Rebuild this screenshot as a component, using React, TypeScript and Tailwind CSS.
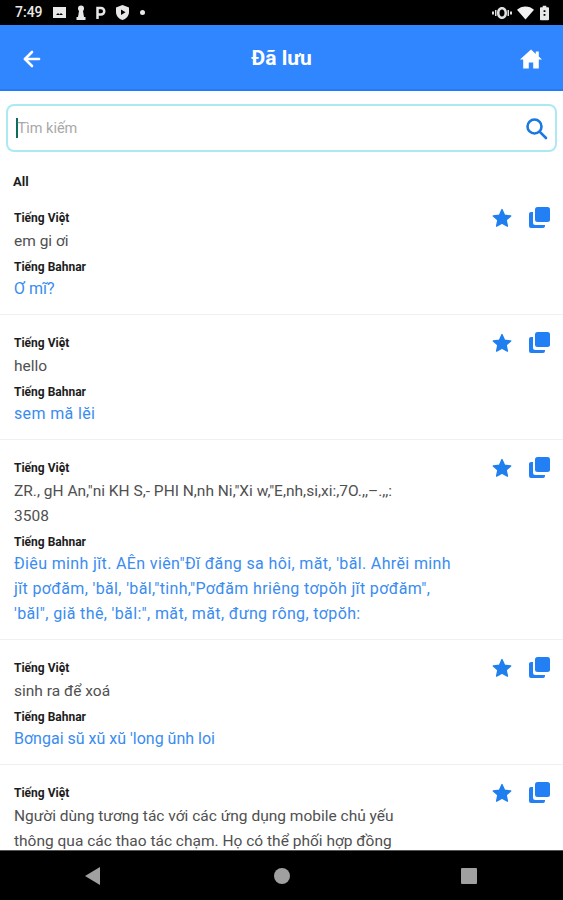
import React from "react";
import { ArrowLeft } from "lucide-react";

type Saved = { source: string[]; target: string[]; wide?: boolean };

const items: Saved[] = [
  { source: ["em gi ơi"], target: ["Ơ mĩ?"] },
  { source: ["hello"], target: ["sem mă lĕi"], wide: true },
  {
    source: ["ZR., gH An,\"ni KH S,- PHI N,nh Ni,\"Xi w,\"E,nh,si,xi:,7O.,,–.,,:", "3508"],
    target: [
      "Điêu minh jĭt. AÊn viên\"Đĭ đăng sa hôi, măt, 'băl. Ahrĕi minh",
      "jĭt pơđăm, 'băl, 'băl,\"tinh,\"Pơđăm hriêng tơpŏh jĭt pơđăm\",",
      "'băl\", giă thê, 'băl:\", măt, măt, đưng rông, tơpŏh:",
    ],
    wide: true,
  },
  { source: ["sinh ra để xoá"], target: ["Bơngai sŭ xŭ xŭ 'long ŭnh loi"] },
  {
    source: [
      "Người dùng tương tác với các ứng dụng mobile chủ yếu",
      "thông qua các thao tác chạm. Họ có thể phối hợp đồng",
    ],
    target: [],
  },
];

const StarIcon = () => (
  <svg width="22" height="22" viewBox="0 0 24 24" fill="#1f7fef" stroke="#1f7fef" strokeWidth="1.5" strokeLinejoin="round">
    <path d="M12 2.800l2.800 6.200 6.700.7-5 4.500 1.400 6.600L12 17.500l-5.900 3.300 1.400-6.600-5-4.500 6.700-.7z" />
  </svg>
);

const CopyIcon = () => (
  <svg width="23" height="23" viewBox="0 0 23 23" fill="#2280f4">
    <rect x="7" y="1" width="15" height="15" rx="2.500" />
    <path d="M5 6v10.500A2.500 2.500 0 0 0 7.500 19H17v1a2 2 0 0 1-2 2H3a2 2 0 0 1-2-2V8a2 2 0 0 1 2-2z" />
  </svg>
);

const HomeIcon = () => (
  <svg width="24" height="24" viewBox="0 0 24 24" fill="white">
    <path d="M12 2.500L1 12.500h3.200V21.500h5.600v-6h4.400v6h5.600v-9H23l-3.200-2.900V4.500h-3v2.400z" />
  </svg>
);

const SearchIcon = () => (
  <svg width="24" height="24" viewBox="0 0 24 24" fill="none" stroke="#1a78e0" strokeWidth="2.600" strokeLinecap="round">
    <circle cx="10.500" cy="10.500" r="7" />
    <path d="M15.800 15.800L22 22" />
  </svg>
);

const StatusBar = () => (
  <div className="h-[25px] shrink-0 bg-black flex items-center pl-[15px] pr-[14px] text-[#e8e8e8]">
    <span className="text-[14px] font-medium w-[38px]">7:49</span>
    <div className="flex items-center gap-[10px] flex-1">
      <svg width="13" height="11" viewBox="0 0 13 11" fill="#e8e8e8">
        <path d="M0 0h13v11H0z" />
        <path d="M3 8l2-2 1.500 1.500L8 6l2 2z" fill="#000" />
      </svg>
      <svg width="10" height="15" viewBox="0 0 10 15" fill="#e8e8e8">
        <circle cx="5" cy="3.500" r="3" />
        <path d="M3 6h4l1 6h1.500v3H.5v-3H2z" />
      </svg>
      <svg width="10" height="13" viewBox="0 0 10 13" fill="none" stroke="#e8e8e8" strokeWidth="2.500">
        <path d="M1.500 13V2h3.500a3 3 0 0 1 0 6.500H1.500" />
      </svg>
      <svg width="13" height="15" viewBox="0 0 13 15" fill="#e8e8e8">
        <path fillRule="evenodd" d="M6.500 0L13 2.500V7c0 4-3 7-6.500 8C3 14 0 11 0 7V2.500zM5 4.500v5.500l4.500-2.700z" />
      </svg>
      <div className="w-[5px] h-[5px] rounded-full bg-[#e8e8e8] ml-[1px]" />
    </div>
    <div className="flex items-center gap-[5px]">
      <svg width="20" height="14" viewBox="0 0 20 14" fill="#e0e0e0">
        <path fillRule="evenodd" d="M10 1c3 0 5 2.500 5 6s-2 6-5 6-5-2.500-5-6 2-6 5-6zm0 2.500c-1.500 0-2.500 1.500-2.500 3.500s1 3.500 2.500 3.500 2.500-1.500 2.500-3.500-1-3.500-2.500-3.500z" />
        <path d="M0 5.500h2v3H0zM3 4h1.500v6H3zM15.500 4H17v6h-1.500zM18 5.500h2v3h-2z" />
      </svg>
      <svg width="17" height="14" viewBox="0 0 18 14" fill="#f2f2f2">
        <path d="M0 3.500C2.500 1.300 5.600 0 9 0s6.500 1.300 9 3.500L9 14z" />
      </svg>
      <svg width="9" height="16" viewBox="0 0 10 16" fill="#e8e8e8" className="ml-[1px]">
        <path fillRule="evenodd" d="M3 0h4v1.500h2a1 1 0 0 1 1 1V15a1 1 0 0 1-1 1H1a1 1 0 0 1-1-1V2.500a1 1 0 0 1 1-1h2zM4 5v2h2V5zm0 4v2h2V9z" />
      </svg>
    </div>
  </div>
);

const Header = () => (
  <div className="h-[66px] shrink-0 bg-[#2f86fe] border-b-2 border-[#1f7cf5] pt-[4px] flex items-center justify-between pl-[20px] pr-[20px]">
    <ArrowLeft size={24} color="white" strokeWidth={2.6} />
    <h1 className="text-[21px] font-bold text-white">Đã lưu</h1>
    <HomeIcon />
  </div>
);

const SearchBox = () => (
  <div className="mx-[6px] mt-[13px] h-[48px] shrink-0 rounded-[8px] border-2 border-[#ade9f5] flex items-center pl-[8px] pr-[7px]">
    <div className="w-[1.500px] h-[20px] bg-[#0f6b5c]" />
    <span className="text-[14.500px] text-[#a8a8a8] flex-1 pt-[2px]">Tìm kiếm</span>
    <SearchIcon />
  </div>
);

const Row = ({ item }: { item: Saved }) => (
  <div className="relative border-b border-[#f0f0f0] pl-[14px] pr-[112px] pt-[20px] pb-[13px]">
    <div className="absolute right-[12px] top-[16px] flex items-center gap-[15px]">
      <StarIcon />
      <CopyIcon />
    </div>
    <div className="text-[12px] leading-[16px] font-bold text-[#1c1c1c]">Tiếng Việt</div>
    <div className="text-[15.500px] leading-[25px] text-[#505050] whitespace-nowrap mt-[3px]">
      {item.source.map((line) => (
        <div key={line}>{line}</div>
      ))}
    </div>
    {item.target.length > 0 && (
      <>
        <div className="text-[12px] leading-[16px] font-bold text-[#1c1c1c] mt-[5px]">Tiếng Bahnar</div>
        <div className={`text-[16px] leading-[25px] text-[#3a8cf0] whitespace-nowrap mt-[1px] ${item.wide ? "tracking-[0.36px]" : ""}`}>
          {item.target.map((line) => (
            <div key={line}>{line}</div>
          ))}
        </div>
      </>
    )}
  </div>
);

const NavBar = () => (
  <div className="h-[50px] shrink-0 bg-black border-t border-[#555] flex items-center pl-[85px] pr-[86px] justify-between">
    <svg width="15" height="18" viewBox="0 0 15 18" fill="#a0a0a0">
      <path d="M15 0v18L0 9z" />
    </svg>
    <div className="w-[16px] h-[16px] rounded-full bg-[#a0a0a0] ml-[3px]" />
    <div className="w-[16px] h-[16px] rounded-[1px] bg-[#a0a0a0]" />
  </div>
);

export default function App() {
  return (
    <div className="h-[900px] w-[563px] flex flex-col bg-white overflow-hidden [font-family:Roboto,sans-serif]">
      <StatusBar />
      <Header />
      <SearchBox />
      <div className="flex-1 overflow-hidden">
        <div className="pl-[13px] mt-[21px] text-[13px] leading-[18px] font-bold text-[#1c1c1c]">All</div>
        <div className="-mt-[1px]">
          {items.map((item, i) => (
            <Row key={i} item={item} />
          ))}
        </div>
      </div>
      <NavBar />
    </div>
  );
}
